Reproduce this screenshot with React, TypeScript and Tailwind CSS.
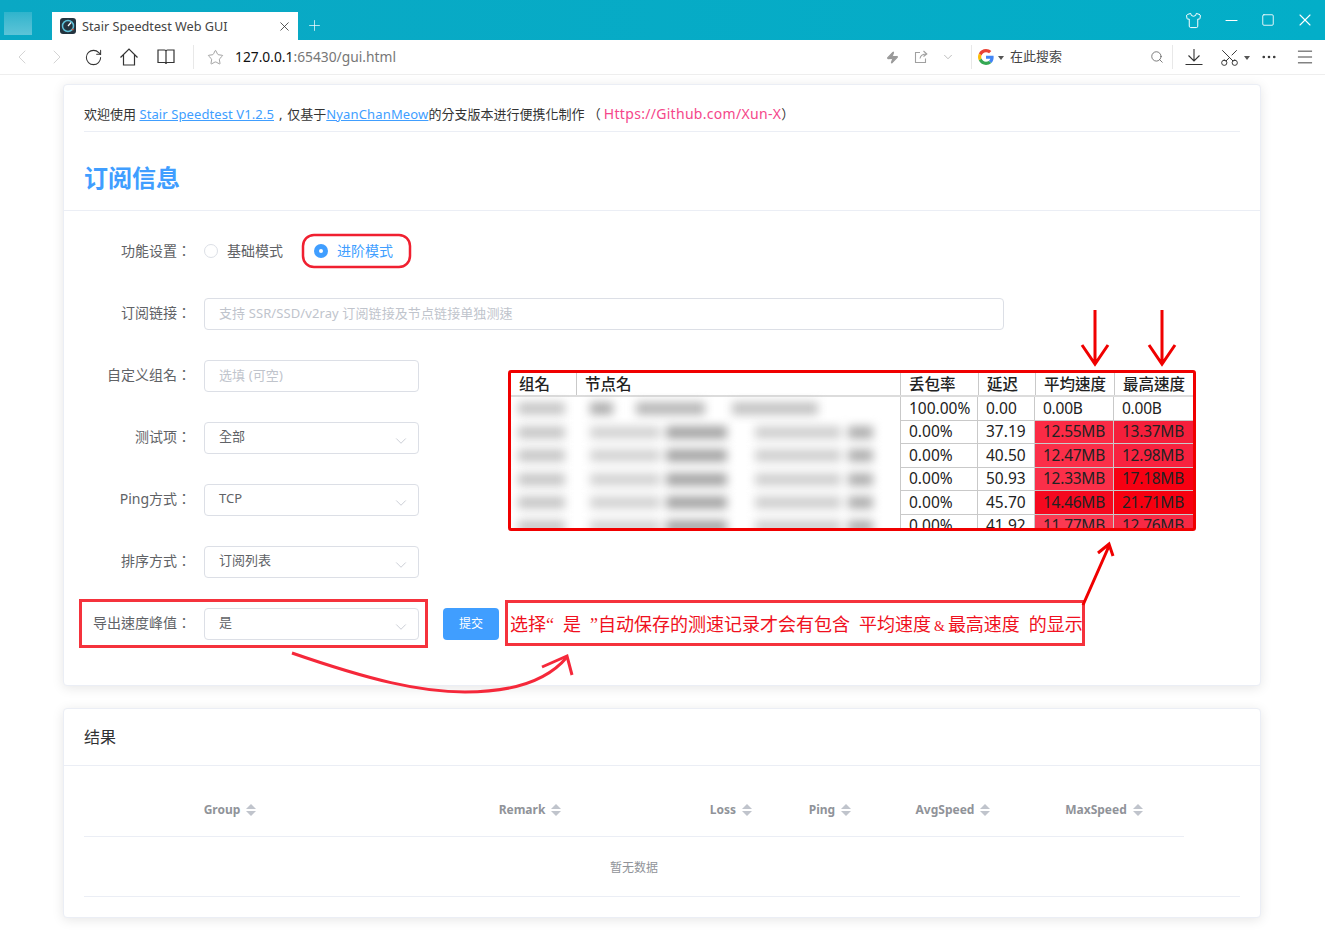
import {
  ChevronDown,
  ChevronLeft,
  ChevronRight,
  Menu,
  Minus,
  MoreHorizontal,
  Plus,
  RotateCw,
  Scissors,
  Search,
  Shirt,
  Square,
  Star,
  X,
  Zap,
} from "lucide-react";

const fontClass = "font-['Noto_Sans','Noto_Sans_CJK_TC',sans-serif]";

const Favicon = () => (
  <svg width="16" height="16" viewBox="0 0 16 16">
    <rect width="16" height="16" rx="3" fill="#24343f" />
    <circle cx="8" cy="8" r="5.5" fill="none" stroke="#5fc0d8" strokeWidth="1.5" />
    <path d="M8 8 L11 4.5" stroke="#fff" strokeWidth="1.2" />
    <path d="M12 11 L13.5 12" stroke="#e0583a" strokeWidth="1.5" />
  </svg>
);

const GoogleG = () => (
  <svg width="16" height="16" viewBox="0 0 48 48">
    <path fill="#EA4335" d="M24 9.5c3.5 0 6.700 1.200 9.200 3.600l6.900-6.900C35.900 2.400 30.500 0 24 0 14.600 0 6.500 5.400 2.600 13.200l8 6.200C12.500 13.700 17.800 9.500 24 9.500z" />
    <path fill="#4285F4" d="M46.900 24.500c0-1.600-.1-3.100-.4-4.500H24v9h12.900c-.6 3-2.200 5.500-4.700 7.200l7.700 6c4.500-4.200 7-10.300 7-17.700z" />
    <path fill="#FBBC05" d="M10.500 28.600c-.5-1.400-.8-3-.8-4.600s.3-3.200.8-4.600l-8-6.200C.9 16.500 0 20.100 0 24s.9 7.500 2.600 10.800l7.900-6.200z" />
    <path fill="#34A853" d="M24 48c6.500 0 11.900-2.100 15.900-5.800l-7.700-6c-2.100 1.400-4.900 2.300-8.200 2.300-6.200 0-11.500-4.200-13.400-9.900l-8 6.200C6.500 42.600 14.600 48 24 48z" />
  </svg>
);

const HomeIcon = () => (
  <svg width="20" height="20" viewBox="0 0 20 20" fill="none" stroke="#333" strokeWidth="1.2" className="ml-[16px]">
    <path d="M1.500 10.500L10 2L18.500 10.500M4.500 8V18H15.500V8" />
  </svg>
);

const BookIcon = () => (
  <svg width="18" height="18" viewBox="0 0 18 18" fill="none" stroke="#333" strokeWidth="1.2" className="ml-[18px]">
    <path d="M1 2H7.500C8.500 2 9 2.600 9 3.500V16C9 15 8.400 14.500 7.500 14.500H1ZM17 2H10.500C9.500 2 9 2.600 9 3.500V16C9 15 9.600 14.500 10.500 14.500H17Z" />
  </svg>
);

const ShareIcon = () => (
  <svg width="14" height="14" viewBox="0 0 14 14" fill="none" stroke="#a0a0a0" strokeWidth="1.1" className="ml-[15px]">
    <path d="M6 2.500H1.500V12.500H11.500V8.500M6 8.500C6.500 5.500 8.500 4 12.500 4M9.500 1L12.800 4L9.500 6.500" />
  </svg>
);

const DownloadIcon = () => (
  <svg width="18" height="18" viewBox="0 0 18 18" fill="none" stroke="#333" strokeWidth="1.1" className="ml-[12px]">
    <path d="M9 1V12.500M3.500 7.500L9 13L14.500 7.500M0.500 16.500H17.500" />
  </svg>
);

const Caret = () => <span className="ml-1 mt-px h-0 w-0 border-x-[3px] border-t-[4px] border-x-transparent border-t-[#555]" />;

const TopBars = () => (
  <>
    <div className="flex h-10 items-end bg-gradient-to-r from-[#0aa8c4] to-[#03aec8]">
      <div className="mb-[5px] ml-[4px] h-[23px] w-[28px] bg-gradient-to-b from-[#2eb4cc] to-[#5cc4d8]" />
      <div className="ml-5 flex h-7 w-[246px] items-center bg-white pl-[8px] pr-[6px]">
        <Favicon />
        <span className="ml-[6px] flex-1 text-[12.7px] leading-none text-[#444]">Stair Speedtest Web GUI</span>
        <X size={15} strokeWidth={1.3} className="text-[#333]" />
      </div>
      <div className="mb-[6px] ml-[8px]">
        <Plus size={17} strokeWidth={1} className="text-white" />
      </div>
      <div className="mb-[10px] ml-auto flex items-center text-white">
        <Shirt size={17} strokeWidth={1.4} className="mr-[20px]" />
        <Minus size={19} strokeWidth={1.3} className="mr-[20px]" />
        <Square size={14} strokeWidth={1.5} className="mr-[20px]" />
        <X size={20} strokeWidth={1.3} className="mr-[10px]" />
      </div>
    </div>
    <div className="flex h-[35px] items-center border-b border-[#eeeeee] bg-white">
      <ChevronLeft size={24} strokeWidth={1} className="ml-[10px] text-[#d4d4d4]" />
      <ChevronRight size={24} strokeWidth={1} className="ml-[11px] text-[#d4d4d4]" />
      <RotateCw size={19} strokeWidth={1.3} className="ml-[15px] text-[#333]" />
      <HomeIcon />
      <BookIcon />
      <div className="ml-[18px] h-[24px] w-px bg-[#e8e8e8]" />
      <Star size={17} strokeWidth={1.1} className="ml-[13px] text-[#888]" />
      <span className="ml-[11px] font-['Noto_Sans',sans-serif] text-[13.8px] text-[#777]">
        <span className="text-[#111]">127.0.0.1</span>:65430/gui.html
      </span>
      <Zap size={13} className="ml-[490px] fill-[#999] text-[#999]" />
      <ShareIcon />
      <ChevronDown size={14} strokeWidth={1.1} className="ml-[13px] text-[#999]" />
      <div className="ml-[16px] h-[24px] w-px bg-[#e8e8e8]" />
      <div className="ml-[6px] flex items-center">
        <GoogleG />
        <Caret />
      </div>
      <span className="ml-[6px] w-[140px] text-[13px] text-[#444]">在此搜索</span>
      <Search size={14} strokeWidth={1.3} className="text-[#555]" />
      <div className="ml-[8px] h-[24px] w-px bg-[#e8e8e8]" />
      <DownloadIcon />
      <div className="ml-[16px] flex items-center">
        <Scissors size={21} strokeWidth={1.1} className="-rotate-90 text-[#333]" />
        <Caret />
      </div>
      <MoreHorizontal size={18} strokeWidth={1.5} className="ml-[10px] text-[#333]" />
      <Menu size={20} strokeWidth={1.1} className="ml-[17px] text-[#333]" />
    </div>
  </>
);

const FormRow = ({ label, children }: { label: string; children: React.ReactNode }) => (
  <div className="mb-[30px] flex h-8 items-center">
    <label className="w-[127px] pb-[4px] text-right text-[14px] text-[#606266]">{label}</label>
    {children}
  </div>
);

const SelectBox = ({ value }: { value: string }) => (
  <div className="ml-[13px] flex h-8 w-[215px] items-center justify-between rounded border border-[#dcdfe6] pl-[14px] pr-[8px] text-[13px] text-[#606266]">
    <span className="pb-[2px]">{value}</span>
    <ChevronDown size={18} strokeWidth={1.1} className="mt-[5px] text-[#c0c4cc]" />
  </div>
);

const TextBox = ({ placeholder, width }: { placeholder: string; width: string }) => (
  <div className={`ml-[13px] flex h-8 items-center rounded border border-[#dcdfe6] pl-[14px] text-[13px] tracking-[0.1px] text-[#c0c4cc] ${width}`}>
    {placeholder}
  </div>
);

const SubscribeCard = () => (
  <div className="ml-[63px] mt-[9px] h-[602px] w-[1198px] rounded border border-[#ebeef5] bg-white shadow-[0_2px_12px_rgba(0,0,0,0.1)]">
    <div className="mx-5 flex h-[47px] items-end border-b border-[#ebeef5] pb-[7px] text-[13px] text-[#333]">
      <span>
        欢迎使用 <span className="tracking-[0.1px] text-[#409eff] underline">Stair Speedtest V1.2.5</span>
        <span className="mx-[1.5px]"> , </span>仅基于
        <span className="tracking-[0.15px] text-[#409eff] underline">NyanChanMeow</span>的分支版本进行便携化制作 （
        <span className="ml-[3px] text-[14px] tracking-[0.3px] text-[#f5468a]">Https://Github.com/Xun-X</span>）
      </span>
    </div>
    <div className="flex h-[79px] items-center border-b border-[#ebeef5] pl-5 pt-[13px] text-[24px] font-bold text-[#409eff]">
      订阅信息
    </div>
    <div className="pt-[25px]">
      <FormRow label="功能设置：">
        <span className="mb-[2px] ml-[13px] h-[14px] w-[14px] rounded-full border border-[#dcdfe6]" />
        <span className="ml-[9px] pb-[4px] text-[14px] text-[#606266]">基础模式</span>
        <span className="mb-[2px] ml-[31px] flex h-[14px] w-[14px] items-center justify-center rounded-full bg-[#409eff]">
          <span className="h-1 w-1 rounded-full bg-white" />
        </span>
        <span className="ml-[9px] pb-[4px] text-[14px] text-[#409eff]">进阶模式</span>
      </FormRow>
      <FormRow label="订阅链接：">
        <TextBox placeholder="支持 SSR/SSD/v2ray 订阅链接及节点链接单独测速" width="w-[800px]" />
      </FormRow>
      <FormRow label="自定义组名：">
        <TextBox placeholder="选填 (可空)" width="w-[215px]" />
      </FormRow>
      <FormRow label="测试项：">
        <SelectBox value="全部" />
      </FormRow>
      <FormRow label="Ping方式：">
        <SelectBox value="TCP" />
      </FormRow>
      <FormRow label="排序方式：">
        <SelectBox value="订阅列表" />
      </FormRow>
      <FormRow label="导出速度峰值：">
        <SelectBox value="是" />
        <button className="ml-6 h-8 w-14 rounded bg-[#409eff] text-[12px] text-white">提交</button>
      </FormRow>
    </div>
  </div>
);

const resultColumns = [
  { name: "Group", width: "w-[292px]" },
  { name: "Remark", width: "w-[308px]" },
  { name: "Loss", width: "w-[94px]" },
  { name: "Ping", width: "w-[104px]" },
  { name: "AvgSpeed", width: "w-[142px]" },
  { name: "MaxSpeed", width: "w-[160px]" },
];

const ResultCard = () => (
  <div className="ml-[63px] mt-[22px] h-[210px] w-[1198px] rounded border border-[#ebeef5] bg-white shadow-[0_2px_12px_rgba(0,0,0,0.1)]">
    <div className="flex h-[57px] items-center border-b border-[#ebeef5] pl-5 text-[16px] text-[#303133]">结果</div>
    <div className="mx-5 pt-[14px]">
      <div className="flex h-[57px] w-[1100px] items-center border-b border-[#ebeef5] pt-[4px]">
        {resultColumns.map((col) => (
          <div key={col.name} className={`flex items-center justify-center ${col.width}`}>
            <span className="text-[12px] font-bold text-[#909399]">{col.name}</span>
            <span className="ml-[6px] flex flex-col gap-[2px]">
              <span className="h-0 w-0 border-x-[5px] border-b-[5px] border-x-transparent border-b-[#c0c4cc]" />
              <span className="h-0 w-0 border-x-[5px] border-t-[5px] border-x-transparent border-t-[#c0c4cc]" />
            </span>
          </div>
        ))}
      </div>
      <div className="h-[60px] border-b border-[#ebeef5]">
        <div className="flex h-[60px] w-[1100px] items-center justify-center pt-[2px] text-[12px] text-[#909399]">暂无数据</div>
      </div>
    </div>
  </div>
);

const speedRows = [
  { loss: "100.00%", ping: "0.00", avg: "0.00B", max: "0.00B", avgBg: "bg-white", maxBg: "bg-white" },
  { loss: "0.00%", ping: "37.19", avg: "12.55MB", max: "13.37MB", avgBg: "bg-[#fb2b45]", maxBg: "bg-[#f51f3b]" },
  { loss: "0.00%", ping: "40.50", avg: "12.47MB", max: "12.98MB", avgBg: "bg-[#fb2f49]", maxBg: "bg-[#f8223f]" },
  { loss: "0.00%", ping: "50.93", avg: "12.33MB", max: "17.18MB", avgBg: "bg-[#fb2f49]", maxBg: "bg-[#f70012]" },
  { loss: "0.00%", ping: "45.70", avg: "14.46MB", max: "21.71MB", avgBg: "bg-[#f5091f]", maxBg: "bg-[#f70010]" },
  { loss: "0.00%", ping: "41.92", avg: "11.77MB", max: "12.76MB", avgBg: "bg-[#fb3a52]", maxBg: "bg-[#f82a45]" },
];

// the blurred-out names in the pasted table
const BlurredNames = ({ first }: { first: boolean }) => (
  <div className="flex w-[389px] items-center overflow-hidden pl-[7px] blur-[5px]">
    <span className="h-[13px] w-[47px] bg-[#c8c8c8]" />
    {first ? (
      <>
        <span className="ml-[25px] h-[13px] w-[23px] bg-[#b0b0b0]" />
        <span className="ml-[23px] h-[13px] w-[69px] bg-[#b8b8b8]" />
        <span className="ml-[27px] h-[13px] w-[86px] bg-[#c4c4c4]" />
      </>
    ) : (
      <>
        <span className="ml-[25px] h-[13px] w-[70px] bg-[#d4d4d4]" />
        <span className="ml-[6px] h-[13px] w-[61px] bg-[#a6a6a6]" />
        <span className="ml-[28px] h-[13px] w-[86px] bg-[#d0d0d0]" />
        <span className="ml-[7px] h-[13px] w-[25px] bg-[#b0b0b0]" />
      </>
    )}
  </div>
);

const HeadCell = ({ text, width }: { text: string; width: string }) => (
  <div className={`flex h-full items-center border-r border-[#c9c9c9] pl-2 pt-px font-medium ${width}`}>{text}</div>
);

const SpeedTableShot = () => (
  <div className="absolute left-[508px] top-[370px] h-[161px] w-[688px] overflow-hidden rounded-[3px] border-[3px] border-[#f00000] bg-white text-[15.5px] leading-none text-[#222]">
    <div className="flex h-[24px] border-b-2 border-[#dcdcdc]">
      <HeadCell text="组名" width="w-[66px]" />
      <HeadCell text="节点名" width="w-[324px]" />
      <HeadCell text="丢包率" width="w-[78px]" />
      <HeadCell text="延迟" width="w-[57px]" />
      <HeadCell text="平均速度" width="w-[79px]" />
      <div className="flex h-full items-center pl-2 pt-px font-medium">最高速度</div>
    </div>
    {speedRows.map((row, i) => (
      <div key={row.ping} className="flex h-[23.5px]">
        <BlurredNames first={i === 0} />
        <div className="flex flex-1 border-b border-[#c9c9c9]">
          <div className="flex w-[78px] items-center border-x border-[#c9c9c9] pl-2">{row.loss}</div>
          <div className="flex w-[57px] items-center border-r border-[#c9c9c9] pl-2">{row.ping}</div>
          <div className={`flex w-[79px] items-center border-r border-[#c9c9c9] pl-2 tracking-[-0.25px] ${row.avgBg}`}>{row.avg}</div>
          <div className={`flex flex-1 items-center pl-2 tracking-[-0.25px] ${row.maxBg}`}>{row.max}</div>
        </div>
      </div>
    ))}
  </div>
);

const Annotations = () => (
  <>
    <svg className="pointer-events-none absolute left-0 top-0" width="1325" height="935" fill="none">
      <rect x="303" y="235" width="107" height="32" rx="11" stroke="#f02030" strokeWidth="2.5" />
      <rect x="80.500" y="600.500" width="346" height="46" stroke="#f5323c" strokeWidth="3" />
      <rect x="506.500" y="601.500" width="577" height="43" stroke="#f5323c" strokeWidth="3" />
      <path d="M1095 310V363M1082 345L1095 364L1108 345" stroke="#f00000" strokeWidth="3" />
      <path d="M1162 310V363M1149 345L1162 364L1175 345" stroke="#f00000" strokeWidth="3" />
      <path d="M1083 605L1109 546M1098 553L1109 544L1113 556" stroke="#f00000" strokeWidth="3" />
      <path d="M292 653C370 680 420 692 465 692C515 692 548 680 567 657" stroke="#f5283a" strokeWidth="3" />
      <path d="M542 667L567 656L572 675" stroke="#f5283a" strokeWidth="3" />
    </svg>
    <SpeedTableShot />
    <div className="absolute left-[510px] top-[612px] whitespace-pre font-['Liberation_Serif','Noto_Sans_CJK_SC',serif] text-[18px] leading-[26px] text-[#f01020]">
      选择“  是  ”自动保存的测速记录才会有包含  平均速度 <span className="-mx-[1.5px] text-[14px]">&</span> 最高速度  的显示
    </div>
  </>
);

export default function App() {
  return (
    <div className={`relative h-[935px] w-[1325px] overflow-hidden bg-white ${fontClass}`}>
      <TopBars />
      <SubscribeCard />
      <ResultCard />
      <Annotations />
    </div>
  );
}
